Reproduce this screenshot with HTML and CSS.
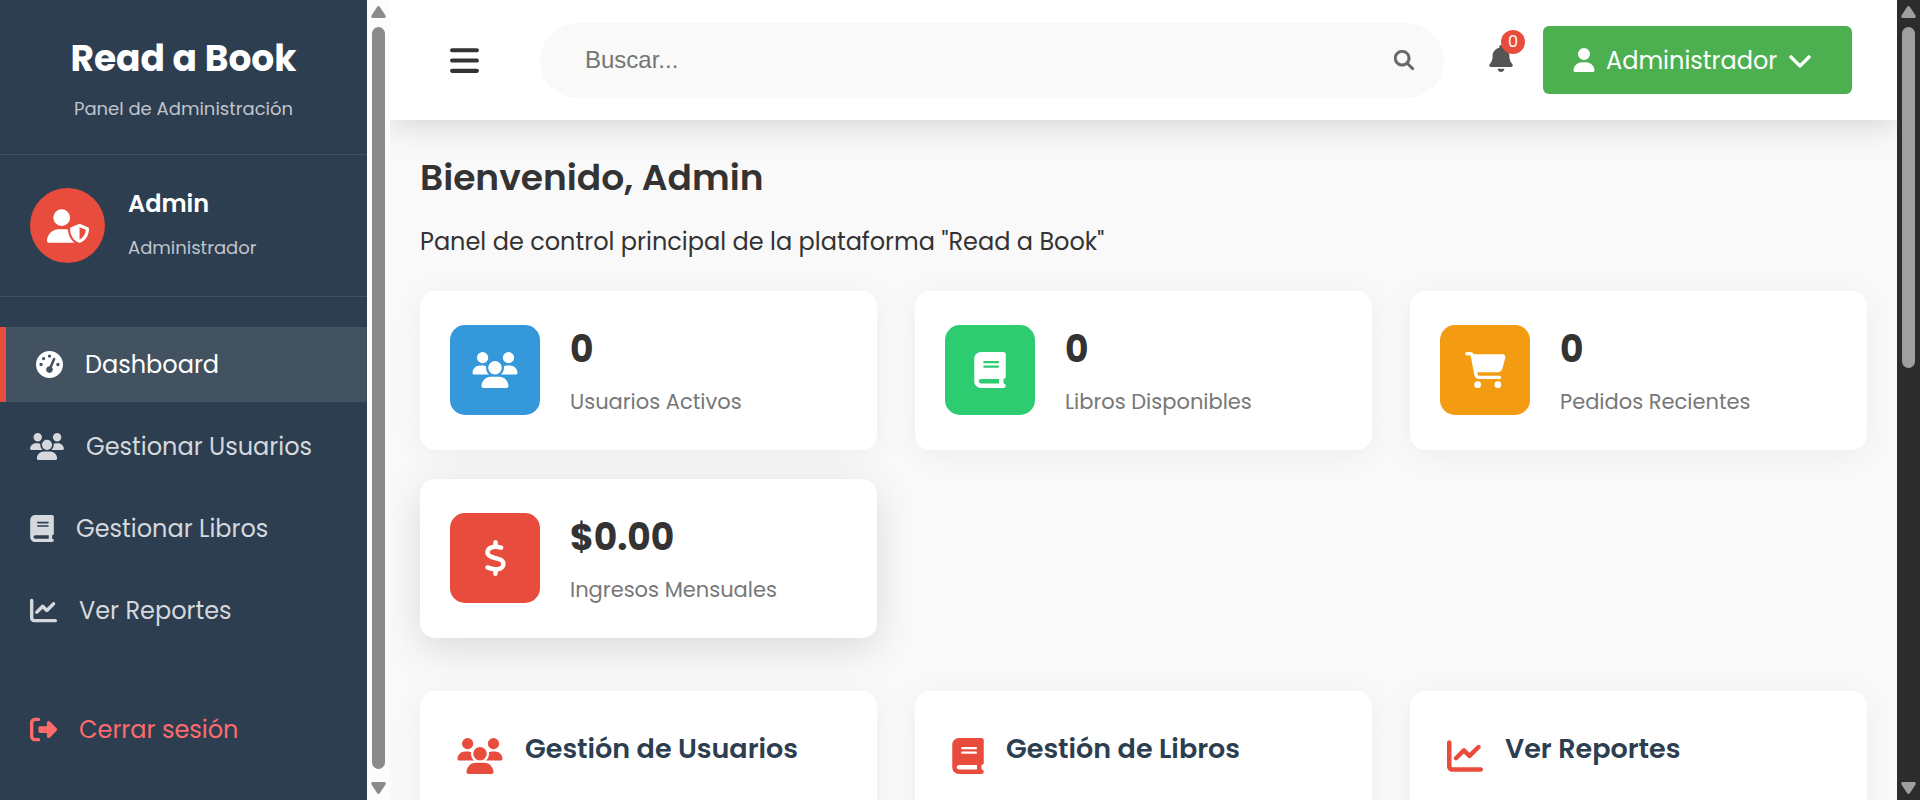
FILE: index.html
```html
<!DOCTYPE html>
<html lang="es">
<head>
<meta charset="utf-8">
<title>Read a Book - Panel de Administración</title>
<link rel="stylesheet" href="styles.css">
</head>
<body>
<svg class="sprite" aria-hidden="true">
  <symbol id="i-users" viewBox="0 0 640 512"><path d="M144 0a80 80 0 1 1 0 160A80 80 0 1 1 144 0zM512 0a80 80 0 1 1 0 160A80 80 0 1 1 512 0zM0 298.7C0 239.8 47.8 192 106.7 192l42.7 0c15.9 0 31 3.5 44.6 9.7c-1.3 7.2-1.9 14.7-1.9 22.3c0 38.2 16.8 72.5 43.3 96c-.2 0-.4 0-.7 0L21.3 320C9.6 320 0 310.4 0 298.7zM405.3 320c-.2 0-.4 0-.7 0c26.6-23.5 43.3-57.8 43.3-96c0-7.6-.7-15-1.9-22.3c13.6-6.3 28.7-9.7 44.6-9.7l42.7 0C592.2 192 640 239.8 640 298.7c0 11.8-9.6 21.3-21.3 21.3l-213.3 0zM224 224a96 96 0 1 1 192 0 96 96 0 1 1 -192 0zM128 485.3C128 411.7 187.7 352 261.3 352l117.3 0C452.3 352 512 411.7 512 485.3c0 14.7-11.9 26.7-26.7 26.7l-330.7 0c-14.7 0-26.7-11.9-26.7-26.7z"/></symbol>
  <symbol id="i-book" viewBox="0 0 448 512"><path d="M96 0C43 0 0 43 0 96L0 416c0 53 43 96 96 96l288 0 32 0c17.7 0 32-14.3 32-32s-14.3-32-32-32l0-64c17.7 0 32-14.3 32-32l0-320c0-17.7-14.3-32-32-32L384 0 96 0zm0 384l256 0 0 64L96 448c-17.7 0-32-14.3-32-32s14.3-32 32-32zm32-240c0-8.8 7.2-16 16-16l192 0c8.8 0 16 7.2 16 16s-7.2 16-16 16l-192 0c-8.8 0-16-7.2-16-16zm16 48l192 0c8.8 0 16 7.2 16 16s-7.2 16-16 16l-192 0c-8.8 0-16-7.2-16-16s7.2-16 16-16z"/></symbol>
  <symbol id="i-chart" viewBox="0 0 512 512"><path d="M64 64c0-17.7-14.3-32-32-32S0 46.3 0 64L0 400c0 44.2 35.8 80 80 80l400 0c17.7 0 32-14.3 32-32s-14.3-32-32-32L80 416c-8.8 0-16-7.2-16-16L64 64zm406.6 86.6c12.5-12.5 12.5-32.8 0-45.3s-32.8-12.5-45.3 0L320 210.7l-57.4-57.4c-12.5-12.5-32.8-12.5-45.3 0l-112 112c-12.5 12.5-12.5 32.8 0 45.3s32.8 12.5 45.3 0L240 221.3l57.4 57.4c12.5 12.5 32.8 12.5 45.3 0l128-128z"/></symbol>
  <symbol id="i-exit" viewBox="0 0 512 512"><path d="M377.9 105.9L500.7 228.7c7.2 7.2 11.3 17.1 11.3 27.3s-4.1 20.1-11.3 27.3L377.9 406.1c-6.4 6.4-15 9.9-24 9.9c-18.7 0-33.9-15.2-33.9-33.9l0-62.1-128 0c-17.7 0-32-14.3-32-32l0-64c0-17.7 14.3-32 32-32l128 0 0-62.1c0-18.7 15.2-33.9 33.9-33.9c9 0 17.6 3.6 24 9.9zM160 96L96 96c-17.7 0-32 14.3-32 32l0 256c0 17.7 14.3 32 32 32l64 0c17.7 0 32 14.3 32 32s-14.3 32-32 32l-64 0c-53 0-96-43-96-96L0 128C0 75 43 32 96 32l64 0c17.7 0 32 14.3 32 32s-14.3 32-32 32z"/></symbol>
  <symbol id="i-gauge" viewBox="0 0 512 512"><path d="M0 256a256 256 0 1 1 512 0A256 256 0 1 1 0 256zM288 96a32 32 0 1 0 -64 0 32 32 0 1 0 64 0zM256 416c35.3 0 64-28.7 64-64c0-17.4-6.9-33.1-18.1-44.6L366 161.7c5.3-12.1-.2-26.3-12.3-31.6s-26.3 .2-31.6 12.3L257.9 288c-.6 0-1.3 0-1.9 0c-35.3 0-64 28.7-64 64s28.7 64 64 64zM176 144a32 32 0 1 0 -64 0 32 32 0 1 0 64 0zM96 288a32 32 0 1 0 0-64 32 32 0 1 0 0 64zm352-32a32 32 0 1 0 -64 0 32 32 0 1 0 64 0z"/></symbol>
  <symbol id="i-cart" viewBox="0 0 576 512"><path d="M0 24C0 10.7 10.7 0 24 0L69.5 0c22 0 41.5 12.8 50.6 32l411 0c26.3 0 45.5 25 38.6 50.4l-41 152.3c-8.5 31.4-37 53.3-69.5 53.3l-288.5 0 5.4 28.5c2.2 11.3 12.1 19.5 23.6 19.5L488 336c13.3 0 24 10.7 24 24s-10.7 24-24 24l-288.3 0c-34.6 0-64.3-24.6-70.7-58.5L77.4 54.5c-.7-3.8-4-6.5-7.9-6.5L24 48C10.7 48 0 37.3 0 24zM128 464a48 48 0 1 1 96 0 48 48 0 1 1 -96 0zm336-48a48 48 0 1 1 0 96 48 48 0 1 1 0-96z"/></symbol>
  <symbol id="i-dollar" viewBox="0 0 320 512"><path d="M160 0c17.7 0 32 14.3 32 32l0 35.7c1.6 .2 3.1 .4 4.7 .7c.4 .1 .7 .1 1.1 .2l48 8.8c17.4 3.2 28.9 19.9 25.7 37.2s-19.9 28.9-37.2 25.7l-47.5-8.7c-31.3-4.6-58.9-1.5-78.3 6.2s-27.2 18.3-29 28.1c-2 10.7-.5 16.7 1.2 20.4c1.8 3.9 5.5 8.3 12.8 13.2c16.3 10.7 41.3 17.7 73.7 26.3l2.9 .8c28.6 7.6 63.6 16.8 89.6 33.8c14.2 9.3 27.6 21.9 35.9 39.5c8.5 17.9 10.3 37.9 6.4 59.2c-6.9 38-33.1 63.4-65.6 76.7c-13.7 5.6-28.6 9.2-44.4 11l0 33.4c0 17.7-14.3 32-32 32s-32-14.3-32-32l0-34.9c-.4-.1-.9-.1-1.3-.2l-.2 0c-24.4-3.8-64.5-14.3-91.5-26.3c-16.1-7.2-23.4-26.1-16.2-42.2s26.1-23.4 42.2-16.2c20.9 9.3 55.3 18.5 75.2 21.6c31.9 4.7 58.2 2 76-5.3c16.9-6.9 24.6-16.9 26.8-28.9c1.9-10.6 .4-16.7-1.3-20.4c-1.9-4-5.6-8.4-13-13.3c-16.4-10.7-41.5-17.7-74-26.3l-2.8-.7C119.4 279.3 84.4 270 58.4 253c-14.2-9.3-27.5-22-35.8-39.6c-8.4-17.9-10.1-37.9-6.1-59.2C23.7 116 52.3 91.2 84.8 78.3c13.3-5.3 27.9-8.9 43.2-11L128 32c0-17.7 14.3-32 32-32z"/></symbol>
  <symbol id="i-shield" viewBox="0 0 640 512"><path d="M224 256A128 128 0 1 0 224 0a128 128 0 1 0 0 256zm-45.7 48C79.8 304 0 383.8 0 482.3C0 498.7 13.3 512 29.7 512l388.6 0c1.8 0 3.5-.2 5.3-.5c-76.3-55.1-99.8-141-103.1-200.2c-16.1-4.8-33.1-7.3-50.7-7.3l-91.4 0zm308.8-78.3l-120 48C358 277.4 352 286.2 352 296c0 63.3 25.9 168.8 134.8 214.2c5.9 2.5 12.6 2.5 18.5 0C614.1 464.8 640 359.3 640 296c0-9.8-6-18.6-15.1-22.3l-120-48c-5.7-2.3-12.1-2.3-17.8 0zM591.4 312c-3.9 50.7-27.2 116.7-95.4 149.7l0-187.8L591.4 312z"/></symbol>
  <symbol id="i-bell" viewBox="0 0 448 512"><path d="M224 0c-17.7 0-32 14.3-32 32l0 19.2C119 66 64 130.6 64 208l0 18.8c0 47-17.3 92.4-48.5 127.6l-7.4 8.3c-8.4 9.4-10.4 22.9-5.3 34.4S19.4 416 32 416l384 0c12.6 0 24-7.4 29.2-18.9s3.1-25-5.3-34.4l-7.4-8.3C401.3 319.2 384 273.9 384 226.8l0-18.8c0-77.4-55-142-128-156.8L256 32c0-17.7-14.3-32-32-32zm45.3 493.3c12-12 18.7-28.3 18.7-45.3l-64 0-64 0c0 17 6.7 33.3 18.7 45.3s28.3 18.7 45.3 18.7s33.3-6.7 45.3-18.7z"/></symbol>
  <symbol id="i-search" viewBox="0 0 512 512"><path d="M416 208c0 45.9-14.9 88.3-40 122.7L502.6 457.4c12.5 12.5 12.5 32.8 0 45.3s-32.8 12.5-45.3 0L330.7 376c-34.4 25.2-76.8 40-122.7 40C93.1 416 0 322.9 0 208S93.1 0 208 0S416 93.1 416 208zM208 352a144 144 0 1 0 0-288 144 144 0 1 0 0 288z"/></symbol>
  <symbol id="i-bars" viewBox="0 0 448 512"><path d="M0 96C0 78.3 14.3 64 32 64l384 0c17.7 0 32 14.3 32 32s-14.3 32-32 32L32 128C14.3 128 0 113.7 0 96zM0 256c0-17.7 14.3-32 32-32l384 0c17.7 0 32 14.3 32 32s-14.3 32-32 32L32 288c-17.7 0-32-14.3-32-32zM448 416c0 17.7-14.3 32-32 32L32 448c-17.7 0-32-14.3-32-32s14.3-32 32-32l384 0c17.7 0 32 14.3 32 32z"/></symbol>
  <symbol id="i-user" viewBox="0 0 448 512"><path d="M224 256A128 128 0 1 0 224 0a128 128 0 1 0 0 256zm-45.7 48C79.8 304 0 383.8 0 482.3C0 498.7 13.3 512 29.7 512l388.6 0c16.4 0 29.7-13.3 29.7-29.7C448 383.8 368.2 304 269.7 304l-91.4 0z"/></symbol>
  <symbol id="i-down" viewBox="0 0 512 512"><path d="M233.4 406.6c12.5 12.5 32.8 12.5 45.3 0l192-192c12.5-12.5 12.5-32.8 0-45.3s-32.8-12.5-45.3 0L256 338.7 86.6 169.4c-12.5-12.5-32.8-12.5-45.3 0s-12.5 32.8 0 45.3l192 192z"/></symbol>
  <symbol id="i-arrow" viewBox="0 0 15 12"><path d="M6 1Q7.500-1 9 1L14.500 9.500Q15.500 12 13 12H2Q-.5 12 .5 9.500z"/></symbol>
</svg>

<div class="app">
  <aside class="sidebar">
    <header class="brand">
      <h2 class="brand-name">Read a Book</h2>
      <p class="brand-sub">Panel de Administración</p>
    </header>
    <section class="profile">
      <div class="avatar"><svg class="icon avatar-icon"><use href="#i-shield"/></svg></div>
      <div class="profile-info">
        <h4 class="profile-name">Admin</h4>
        <p class="profile-role">Administrador</p>
      </div>
    </section>
    <nav class="nav">
      <a class="nav-link active" href="#"><svg class="icon nav-icon"><use href="#i-gauge"/></svg><span>Dashboard</span></a>
      <a class="nav-link" href="#"><svg class="icon nav-icon wide"><use href="#i-users"/></svg><span>Gestionar Usuarios</span></a>
      <a class="nav-link" href="#"><svg class="icon nav-icon narrow"><use href="#i-book"/></svg><span>Gestionar Libros</span></a>
      <a class="nav-link" href="#"><svg class="icon nav-icon"><use href="#i-chart"/></svg><span>Ver Reportes</span></a>
      <a class="nav-link logout" href="#"><svg class="icon nav-icon"><use href="#i-exit"/></svg><span>Cerrar sesión</span></a>
    </nav>
  </aside>
  <div class="scrollbar light" aria-hidden="true">
    <svg class="arrow"><use href="#i-arrow"/></svg>
    <div class="track"><div class="thumb full"></div></div>
    <svg class="arrow down"><use href="#i-arrow"/></svg>
  </div>

  <div class="main">
    <header class="topbar">
      <button class="menu-btn" type="button" aria-label="Menú"><svg class="icon menu-icon"><use href="#i-bars"/></svg></button>
      <form class="search">
        <input class="search-input" type="text" placeholder="Buscar..." aria-label="Buscar">
        <button class="search-btn" type="button" aria-label="Buscar"><svg class="icon search-icon"><use href="#i-search"/></svg></button>
      </form>
      <div class="actions">
        <button class="bell" type="button" aria-label="Notificaciones"><svg class="icon bell-icon"><use href="#i-bell"/></svg><span class="badge">0</span></button>
        <button class="user-btn" type="button"><svg class="icon user-icon"><use href="#i-user"/></svg><span>Administrador</span><svg class="icon down-icon"><use href="#i-down"/></svg></button>
      </div>
    </header>

    <main class="content">
      <section class="welcome">
        <h1 class="welcome-title">Bienvenido, Admin</h1>
        <p class="welcome-text">Panel de control principal de la plataforma "Read a Book"</p>
      </section>
      <section class="grid stats">
        <article class="card stat">
          <div class="stat-icon blue"><svg class="icon big wide"><use href="#i-users"/></svg></div>
          <div class="stat-info"><h3 class="stat-value">0</h3><p class="stat-label">Usuarios Activos</p></div>
        </article>
        <article class="card stat">
          <div class="stat-icon green"><svg class="icon big narrow"><use href="#i-book"/></svg></div>
          <div class="stat-info"><h3 class="stat-value">0</h3><p class="stat-label">Libros Disponibles</p></div>
        </article>
        <article class="card stat">
          <div class="stat-icon orange"><svg class="icon big cart"><use href="#i-cart"/></svg></div>
          <div class="stat-info"><h3 class="stat-value">0</h3><p class="stat-label">Pedidos Recientes</p></div>
        </article>
        <article class="card stat raised">
          <div class="stat-icon red"><svg class="icon big dollar"><use href="#i-dollar"/></svg></div>
          <div class="stat-info"><h3 class="stat-value">$0.00</h3><p class="stat-label">Ingresos Mensuales</p></div>
        </article>
      </section>
      <section class="grid modules">
        <article class="card module"><svg class="icon big wide module-icon"><use href="#i-users"/></svg><h3 class="module-title">Gestión de Usuarios</h3></article>
        <article class="card module"><svg class="icon big narrow module-icon"><use href="#i-book"/></svg><h3 class="module-title">Gestión de Libros</h3></article>
        <article class="card module"><svg class="icon big module-icon"><use href="#i-chart"/></svg><h3 class="module-title">Ver Reportes</h3></article>
      </section>
    </main>
  </div>
  <div class="scrollbar dark" aria-hidden="true">
    <svg class="arrow"><use href="#i-arrow"/></svg>
    <div class="track"><div class="thumb"></div></div>
    <svg class="arrow down"><use href="#i-arrow"/></svg>
  </div>
</div>
</body>
</html>
```
FILE: styles.css
```css
* { box-sizing: border-box; margin: 0; padding: 0; }

body {
  font-family: Poppins, Inter, "Open Sans", sans-serif;
  font-size: 24px;
  color: #333;
  background: #f9f9f9;
}

button { border: 0; background: none; font: inherit; color: inherit; cursor: pointer; }

.sprite { display: none; }
.icon { display: block; flex: none; fill: currentColor; }

.app { display: flex; height: 100vh; overflow: hidden; }

/* Sidebar */
.sidebar { flex: none; width: 367px; background: #2c3e50; color: #fff; overflow: hidden; }
.brand { padding: 32px 30px 31px; text-align: center; border-bottom: 1px solid #415161; }
.brand-name { font-size: 36px; line-height: 54px; font-weight: 700; }
.brand-sub { margin-top: 9px; font-size: 18px; line-height: 28px; color: #c0c5cb; }
.profile { display: flex; align-items: center; gap: 23px; padding: 33px 30px; border-bottom: 1px solid #415161; }
.avatar { display: flex; flex: none; align-items: center; justify-content: center; width: 75px; height: 75px; border-radius: 50%; background: #e74c3c; }
.avatar-icon { width: 42px; height: 34px; }
.profile-info { height: 75px; }
.profile-name { font-size: 24px; line-height: 32px; font-weight: 600; }
.profile-role { margin-top: 12px; font-size: 18px; line-height: 32px; color: #c0c5cb; }
.nav { display: flex; flex-direction: column; gap: 7px; padding: 30px 0; }
.nav-link { display: flex; align-items: center; gap: 22px; height: 75px; padding: 0 30px 1px; color: #d5d8dc; text-decoration: none; white-space: nowrap; }
.nav-link.active { border-left: 6px solid #e74c3c; background: #435261; color: #fff; }
.nav-link.logout { margin-top: 37px; color: #ff6b6b; }
.nav-icon { width: 27px; height: 27px; }
.nav-icon.wide { width: 34px; }
.nav-icon.narrow { width: 24px; }

/* Scrollbars */
.scrollbar { display: flex; flex: none; flex-direction: column; align-items: center; width: 23px; padding: 6px 0; }
.scrollbar.light { background: #fcfcfc; color: #8b8b8b; }
.scrollbar.dark { background: #2c2c2c; color: #9f9f9f; }
.arrow { flex: none; width: 15px; height: 12px; fill: currentColor; }
.arrow.down { transform: rotate(180deg); }
.track { flex: 1; width: 13px; margin: 9px 0 13px; }
.thumb { height: 46%; border-radius: 7px; background: currentColor; }
.thumb.full { height: 100%; }

/* Top bar */
.main { display: flex; flex: 1; flex-direction: column; min-width: 0; overflow: hidden; }
.topbar { display: flex; flex: none; align-items: center; height: 120px; padding: 0 45px; background: #fff; box-shadow: 0 5px 30px rgba(0, 0, 0, .15); }
.menu-btn { padding: 15px; color: #333; }
.menu-icon { width: 29px; height: 33px; }
.search { display: flex; flex: 1; align-items: center; margin-left: 46px; height: 75px; padding: 0 30px 0 45px; border-radius: 38px; background: #f9f9f9; }
.search-input { flex: 1; min-width: 0; border: 0; outline: 0; background: none; font-family: "Liberation Sans", Arial, sans-serif; font-size: 24px; color: #333; }
.search-input::placeholder { color: #757575; }
.search-btn { color: #666; }
.search-icon { width: 20px; height: 20px; stroke: currentColor; stroke-width: 12px; overflow: visible; }
.actions { display: flex; align-items: center; gap: 30px; margin-left: 45px; }
.bell { position: relative; padding-bottom: 4px; color: #555; }
.bell-icon { width: 24px; height: 27px; }
.badge { position: absolute; top: -15px; right: -12px; width: 24px; height: 24px; border-radius: 50%; background: #e74c3c; color: #fff; font-size: 16px; line-height: 24px; text-align: center; }
.user-btn { display: flex; align-items: center; gap: 11px; width: 309px; height: 68px; padding: 0 30px; border-radius: 6px; background: #4caf50; color: #fff; }
.user-icon { width: 22px; height: 24px; }
.down-icon { width: 24px; height: 24px; stroke: currentColor; stroke-width: 12px; }

/* Content */
.content { padding: 30px; }
.welcome-title { font-size: 36px; line-height: 56px; font-weight: 600; }
.welcome-text { margin-top: 17px; font-size: 24px; line-height: 38px; }
.grid { display: grid; grid-template-columns: repeat(3, 1fr); gap: 29px 38px; }
.stats { margin-top: 30px; }
.modules { margin-top: 53px; }
.card { border-radius: 15px; background: #fff; box-shadow: 0 5px 30px rgba(0, 0, 0, .05); }
.card.raised { box-shadow: 0 10px 38px rgba(0, 0, 0, .13); }
.stat { display: flex; align-items: center; gap: 30px; height: 159px; padding: 0 30px 1px; }
.stat-icon { display: flex; flex: none; align-items: center; justify-content: center; width: 90px; height: 90px; border-radius: 15px; color: #fff; }
.blue { background: #3498db; }
.green { background: #2ecc71; }
.orange { background: #f39c12; }
.red { background: #e74c3c; }
.big { width: 36px; height: 36px; }
.big.wide { width: 46px; }
.big.narrow { width: 32px; }
.big.cart { width: 41px; }
.big.dollar { width: 23px; }
.stat-value { font-size: 36px; line-height: 60px; font-weight: 700; }
.stat-label { margin-top: 4px; font-size: 21px; line-height: 36px; color: #777; }
.module { display: flex; align-items: flex-start; gap: 22px; min-height: 240px; padding: 37px; }
.module-icon { margin-top: 10px; color: #e74c3c; }
.module-title { font-size: 27px; line-height: 42px; font-weight: 600; color: #2c3e50; }
```
